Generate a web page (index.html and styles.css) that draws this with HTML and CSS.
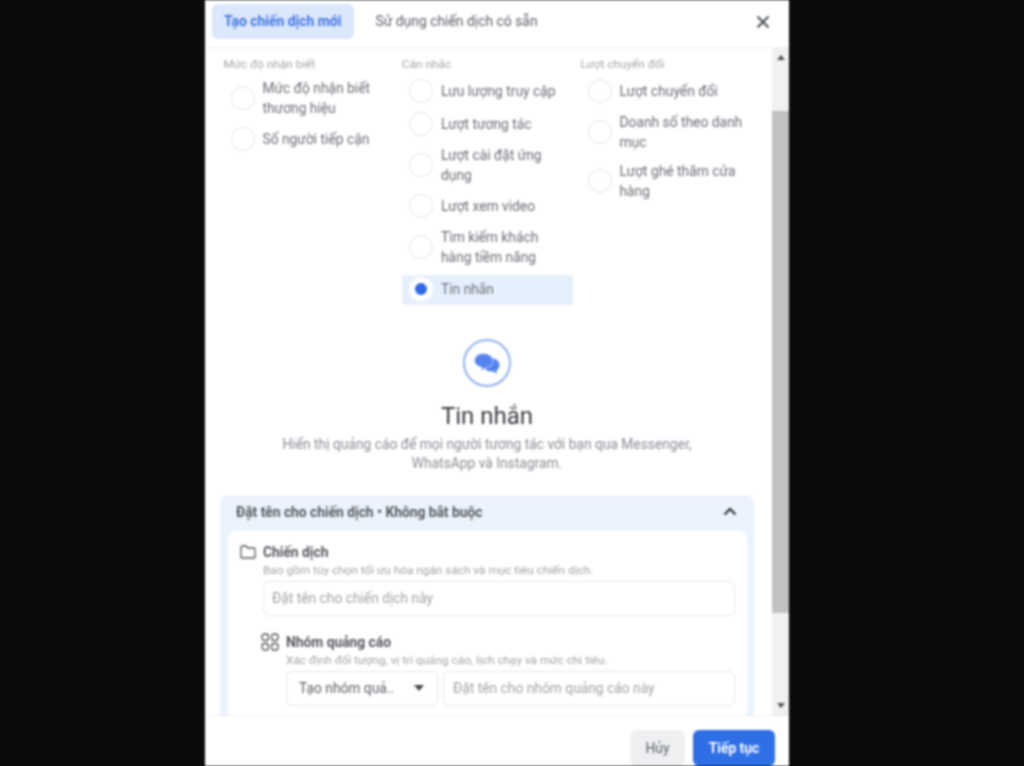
FILE: index.html
```html
<!DOCTYPE html>
<html lang="vi">
<head>
  <meta charset="UTF-8" />
  <title>Tạo chiến dịch mới</title>
  <link rel="stylesheet" href="styles.css">
</head>
<body>
  <div class="modal">
    <div class="header">
      <div class="tab active">Tạo chiến dịch mới</div>
      <div class="tab">Sử dụng chiến dịch có sẵn</div>
      <svg class="close" viewBox="0 0 14 14" width="14" height="14"><path d="M1.5 1.5l11 11M12.5 1.5l-11 11" stroke="#4b4f56" stroke-width="2" fill="none"/></svg>
    </div>

    <div class="middle">
      <div class="content">
        <div class="objectives">
          <div class="column">
            <div class="col-title">Mức độ nhận biết</div>
            <div class="option first-up"><span class="radio"></span><span>Mức độ nhận biết thương hiệu</span></div>
            <div class="option"><span class="radio"></span><span>Số người tiếp cận</span></div>
          </div>
          <div class="column">
            <div class="col-title">Cân nhắc</div>
            <div class="option"><span class="radio"></span><span>Lưu lượng truy cập</span></div>
            <div class="option"><span class="radio"></span><span>Lượt tương tác</span></div>
            <div class="option"><span class="radio"></span><span>Lượt cài đặt ứng dụng</span></div>
            <div class="option"><span class="radio"></span><span>Lượt xem video</span></div>
            <div class="option"><span class="radio"></span><span>Tìm kiếm khách hàng tiềm năng</span></div>
            <div class="option selected"><span class="radio"></span><span>Tin nhắn</span></div>
          </div>
          <div class="column">
            <div class="col-title">Lượt chuyển đổi</div>
            <div class="option"><span class="radio"></span><span>Lượt chuyển đổi</span></div>
            <div class="option"><span class="radio"></span><span>Doanh số theo danh mục</span></div>
            <div class="option"><span class="radio"></span><span>Lượt ghé thăm cửa hàng</span></div>
          </div>
        </div>

        <div class="summary">
          <div class="icon-ring">
            <svg viewBox="0 0 26 21" width="26" height="21">
              <path d="M17 5c4.700 0 8.500 2.900 8.500 7 0 2.200-1 4-2.800 5.200v3.300L19 18.400h-1.500c-4.700 0-8-2.700-8-6.700S12.300 5 17 5z" fill="#5583ee"/>
              <path d="M9.500.5c5 0 9.500 3 9.500 7.200S15 14.700 11 14.700l-3.500 3.300v-3.800C3.500 13.300.5 11 .5 7.500.5 3.300 4.500.5 9.500.5z" fill="#5583ee" stroke="#fff" stroke-width=".6"/>
            </svg>
          </div>
          <h2>Tin nhắn</h2>
          <p>Hiển thị quảng cáo để mọi người tương tác với bạn qua Messenger,<br>WhatsApp và Instagram.</p>
        </div>

        <div class="naming">
          <div class="naming-head">
            <span>Đặt tên cho chiến dịch • Không bắt buộc</span>
            <svg viewBox="0 0 14 9" width="14" height="9"><path d="M1.500 7.500L7 2l5.500 5.500" stroke="#3a3d42" stroke-width="2.400" fill="none"/></svg>
          </div>
          <div class="naming-card">
            <div class="level">
              <svg class="level-icon" viewBox="0 0 16 14" width="16" height="14"><path d="M1 12.500V2a1 1 0 0 1 1-1h4l2 2h6a1 1 0 0 1 1 1v8.500a.5.5 0 0 1-.5.5h-13a.5.5 0 0 1-.5-.5z" stroke="#555" stroke-width="1.300" fill="none"/></svg>
              <div class="level-body">
                <div class="level-name">Chiến dịch</div>
                <div class="level-note">Bao gồm tùy chọn tối ưu hóa ngân sách và mục tiêu chiến dịch.</div>
                <div class="field">Đặt tên cho chiến dịch này</div>
              </div>
            </div>
            <div class="level sub">
              <svg class="level-icon" viewBox="0 0 18 18" width="18" height="18">
                <g stroke="#555" stroke-width="1.300" fill="none">
                  <rect x="1" y="1" width="6.500" height="6.500" rx="2.600"/><rect x="10.500" y="1" width="6.500" height="6.500" rx="2.600"/>
                  <rect x="1" y="10.500" width="6.500" height="6.500" rx="2.600"/><rect x="10.500" y="10.500" width="6.500" height="6.500" rx="2.600"/>
                </g>
              </svg>
              <div class="level-body">
                <div class="level-name">Nhóm quảng cáo</div>
                <div class="level-note">Xác định đối tượng, vị trí quảng cáo, lịch chạy và mức chi tiêu.</div>
                <div class="field-row">
                  <div class="field select"><span>Tạo nhóm quả..</span><i class="caret"></i></div>
                  <div class="field grow">Đặt tên cho nhóm quảng cáo này</div>
                </div>
              </div>
            </div>
          </div>
        </div>
      </div>

      <div class="scrollbar">
        <i class="arrow up"></i>
        <div class="track"><div class="thumb"></div></div>
        <i class="arrow down"></i>
      </div>
    </div>

    <div class="footer">
      <button class="btn">Hủy</button>
      <button class="btn primary">Tiếp tục</button>
    </div>
  </div>
</body>
</html>
```

FILE: styles.css
```css
html, body {
  height: 100%;
}
body {
  margin: 0;
  background: #0b0b0b;
  font-family: Roboto, "Liberation Sans", sans-serif;
  overflow: hidden;
}
.modal {
  width: 584px;
  height: 766px;
  margin-left: 205px;
  background: #fff;
  display: flex;
  flex-direction: column;
  filter: blur(0.8px);
}
.header {
  height: 48px;
  flex: none;
  display: flex;
  align-items: flex-start;
  gap: 10px;
  padding: 4px 19px 0 7px;
  box-sizing: border-box;
  border-bottom: 1px solid #f0f1f3;
}
.tab {
  height: 35px;
  line-height: 35px;
  padding: 0 12px;
  font-size: 13.900px;
  color: #5b5f66;
  border-radius: 6px;
}
.tab.active {
  background: #dbe7fb;
  color: #3f74e4;
  font-weight: 700;
}
.close {
  margin: 11px 0 0 auto;
}
.middle {
  flex: 1;
  min-height: 0;
  display: flex;
}
.content {
  flex: 1;
  min-width: 0;
  overflow: hidden;
  padding: 0 18px 0 15px;
}
.objectives {
  display: flex;
  gap: 7.500px;
  padding: 9px 0 0 3.500px;
}
.column {
  width: 171px;
  flex: none;
  display: flex;
  flex-direction: column;
  gap: 3px;
}
.col-title {
  font-size: 11.800px;
  line-height: 14px;
  height: 17px;
  color: #a3a6ab;
}
.option {
  display: flex;
  align-items: center;
  gap: 8px;
  min-height: 30px;
  padding: 2px 4px 4px 7px;
  box-sizing: border-box;
  font-size: 13.800px;
  line-height: 20px;
  color: #6a6e75;
  border-radius: 3px;
}
.first-up {
  margin-top: -1px;
}
.radio {
  width: 24px;
  height: 24px;
  flex: none;
  box-sizing: border-box;
  border: 1px solid #e3e4e7;
  border-radius: 50%;
  background: #fff;
}
.option.selected {
  margin-top: 1px;
  background: #e6f0fd;
}
.option.selected .radio {
  border: 6px solid #fff;
  background: #2f68e6;
}
.summary {
  text-align: center;
  padding-top: 34px;
}
.icon-ring {
  width: 48px;
  height: 48px;
  box-sizing: border-box;
  margin: 0 auto;
  border: 2px solid #8fb0f0;
  border-radius: 50%;
  display: flex;
  align-items: center;
  justify-content: center;
}
.summary h2 {
  margin: 14px 0 0;
  font-size: 24px;
  line-height: 30px;
  font-weight: 400;
  color: #3a3d42;
}
.summary p {
  margin: 4px 0 0;
  font-size: 13.800px;
  line-height: 19px;
  color: #8a8d93;
}
.naming {
  margin: 22px 0 0 0;
  width: 534px;
  background: #edf3fd;
  border-radius: 8px 8px 0 0;
  padding: 0 7px 0 8px;
  box-sizing: border-box;
}
.naming-head {
  height: 36px;
  display: flex;
  align-items: center;
  justify-content: space-between;
  padding: 0 10px 3px 8px;
  box-sizing: border-box;
  font-size: 13.800px;
  font-weight: 700;
  color: #55585e;
}
.naming-card {
  background: #fff;
  border-radius: 8px 8px 0 0;
  padding: 13px 12px 12px 12px;
}
.level {
  display: flex;
  gap: 7px;
}
.level-icon {
  flex: none;
  margin-top: 1px;
}
.level-body {
  flex: 1;
  min-width: 0;
}
.level.sub {
  margin: 18px 0 0 21px;
}
.level.sub .level-icon {
  margin-top: -1px;
}
.level-name {
  font-size: 13.800px;
  line-height: 16px;
  font-weight: 700;
  color: #55585e;
}
.level-note {
  font-size: 11.800px;
  line-height: 14px;
  margin-top: 3px;
  color: #a0a3a8;
}
.field {
  height: 35px;
  line-height: 33px;
  box-sizing: border-box;
  margin-top: 4px;
  padding: 0 8px;
  font-size: 13.800px;
  color: #a0a3a8;
  background: #fff;
  border: 1px solid #e6e8eb;
  border-radius: 6px;
}
.field-row {
  display: flex;
  gap: 5px;
}
.field.select {
  width: 152px;
  flex: none;
  display: flex;
  align-items: center;
  justify-content: space-between;
  padding: 0 13px 1px 12px;
  color: #5b5f66;
}
.field.grow {
  flex: 1;
  padding-left: 9px;
}
.caret {
  width: 0;
  height: 0;
  border-left: 5px solid transparent;
  border-right: 5px solid transparent;
  border-top: 6px solid #44474c;
}
.scrollbar {
  width: 17px;
  flex: none;
  background: #f1f1f1;
  display: flex;
  flex-direction: column;
  align-items: center;
}
.arrow {
  width: 0;
  height: 0;
  flex: none;
  border-left: 4px solid transparent;
  border-right: 4px solid transparent;
}
.arrow.up {
  margin: 7px 0 0;
  border-bottom: 5px solid #505050;
}
.arrow.down {
  margin: 0 0 8px;
  border-top: 5px solid #505050;
}
.track {
  flex: 1;
  width: 100%;
  padding-top: 51px;
  box-sizing: border-box;
}
.thumb {
  height: 502px;
  background: #c1c1c1;
}
.footer {
  height: 50px;
  flex: none;
  box-sizing: border-box;
  display: flex;
  justify-content: flex-end;
  gap: 8px;
  padding: 14px 14px 0 0;
  background: #fff;
  box-shadow: 0 -1px 2px rgba(0, 0, 0, 0.05);
  position: relative;
}
.btn {
  height: 36px;
  width: 55px;
  padding: 0;
  border: none;
  border-radius: 6px;
  background: #eeeff1;
  color: #5b5f66;
  font-family: inherit;
  font-size: 13.800px;
  font-weight: 400;
}
.btn.primary {
  width: 82px;
  background: #2f6fe6;
  color: #fff;
  font-weight: 700;
}
```
